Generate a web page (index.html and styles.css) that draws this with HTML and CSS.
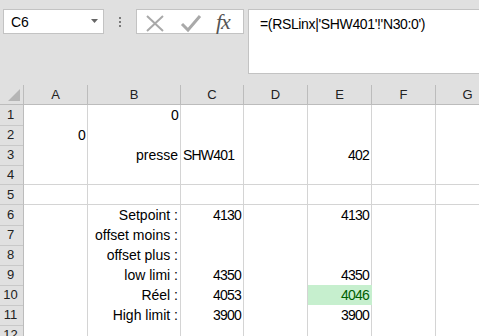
FILE: index.html
```html
<!DOCTYPE html>
<html lang="fr">
<head>
    <meta charset="UTF-8">
    <meta name="viewport" content="width=device-width, initial-scale=1.0">
    <title>Classeur1 - Excel</title>
    <link rel="stylesheet" href="styles.css">
</head>
<body>
    <div class="toolbar">
        <div class="namebox">
            <span>C6</span>
            <svg class="caret" width="7" height="4" viewBox="0 0 7 4"><polygon points="0,0 7,0 3.5,4" fill="#666"/></svg>
        </div>
        <div class="grip"><i></i><i></i><i></i></div>
        <div class="fxbox">
            <svg width="108" height="23" viewBox="0 0 108 23">
                <path d="M10 6 L26 21 M26 6 L10 21" stroke="#a9a9a9" stroke-width="2" fill="none"/>
                <path d="M45 14 L51 20 L63 6" stroke="#a9a9a9" stroke-width="3" fill="none"/>
            </svg>
            <span class="fx">fx</span>
        </div>
        <div class="formula">=(RSLinx|'SHW401'!'N30:0')</div>
    </div>

    <div class="sheet">
        <div class="row head">
            <div class="corner"><svg width="12" height="12" viewBox="0 0 12 12"><polygon points="12,0 12,12 0,12" fill="#b5b5b5"/></svg></div>
            <div class="ch">A</div><div class="ch">B</div><div class="ch">C</div><div class="ch">D</div><div class="ch">E</div><div class="ch">F</div><div class="ch">G</div>
        </div>
        <div class="row">
            <div class="rh">1</div><div class="c"></div><div class="c r num">0</div><div class="c"></div><div class="c"></div><div class="c"></div><div class="c"></div><div class="c"></div>
        </div>
        <div class="row">
            <div class="rh">2</div><div class="c r num">0</div><div class="c"></div><div class="c"></div><div class="c"></div><div class="c"></div><div class="c"></div><div class="c"></div>
        </div>
        <div class="row">
            <div class="rh">3</div><div class="c"></div><div class="c r">presse</div><div class="c num">SHW401</div><div class="c"></div><div class="c r num">402</div><div class="c"></div><div class="c"></div>
        </div>
        <div class="row">
            <div class="rh">4</div><div class="c"></div><div class="c"></div><div class="c"></div><div class="c"></div><div class="c"></div><div class="c"></div><div class="c"></div>
        </div>
        <div class="row">
            <div class="rh">5</div><div class="c"></div><div class="c"></div><div class="c"></div><div class="c"></div><div class="c"></div><div class="c"></div><div class="c"></div>
        </div>
        <div class="row">
            <div class="rh">6</div><div class="c"></div><div class="c r">Setpoint :</div><div class="c r num">4130</div><div class="c"></div><div class="c r num">4130</div><div class="c"></div><div class="c"></div>
        </div>
        <div class="row">
            <div class="rh">7</div><div class="c"></div><div class="c r">offset moins :</div><div class="c"></div><div class="c"></div><div class="c"></div><div class="c"></div><div class="c"></div>
        </div>
        <div class="row">
            <div class="rh">8</div><div class="c"></div><div class="c r">offset plus :</div><div class="c"></div><div class="c"></div><div class="c"></div><div class="c"></div><div class="c"></div>
        </div>
        <div class="row">
            <div class="rh">9</div><div class="c"></div><div class="c r">low limi :</div><div class="c r num">4350</div><div class="c"></div><div class="c r num">4350</div><div class="c"></div><div class="c"></div>
        </div>
        <div class="row">
            <div class="rh">10</div><div class="c"></div><div class="c r">Réel :</div><div class="c r num">4053</div><div class="c"></div><div class="c r num good">4046</div><div class="c"></div><div class="c"></div>
        </div>
        <div class="row">
            <div class="rh">11</div><div class="c"></div><div class="c r">High limit :</div><div class="c r num">3900</div><div class="c"></div><div class="c r num">3900</div><div class="c"></div><div class="c"></div>
        </div>
        <div class="row">
            <div class="rh">12</div><div class="c"></div><div class="c"></div><div class="c"></div><div class="c"></div><div class="c"></div><div class="c"></div><div class="c"></div>
        </div>
    </div>
</body>
</html>
```

FILE: styles.css
```css
* {
    box-sizing: border-box;
    margin: 0;
    padding: 0;
}
body {
    font-family: "Liberation Sans", Arial, sans-serif;
    background-color: #e0e0e0;
    width: 479px;
    height: 336px;
    overflow: hidden;
    color: #000;
}
.toolbar {
    display: flex;
    align-items: flex-start;
    height: 85px;
    padding: 9px 0 0 3px;
}
.namebox {
    width: 101px;
    height: 25px;
    background-color: #fff;
    border: 1px solid #c3c3c3;
    display: flex;
    align-items: center;
    justify-content: space-between;
    padding: 0 5px 0 7px;
    font-size: 14px;
}
.caret {
    margin-top: -2px;
}
.grip {
    width: 32px;
    height: 25px;
    display: flex;
    flex-direction: column;
    align-items: center;
    justify-content: center;
    gap: 2px;
}
.grip i {
    display: block;
    width: 2px;
    height: 2px;
    background-color: #7a7a7a;
}
.fxbox {
    width: 108px;
    height: 25px;
    background-color: #fff;
    border: 1px solid #c3c3c3;
    position: relative;
}
.fxbox svg {
    display: block;
}
.fx {
    position: absolute;
    left: 79px;
    top: -1px;
    font-family: "Liberation Serif", "Times New Roman", serif;
    font-style: italic;
    font-size: 22px;
    color: #555;
    letter-spacing: -1px;
}
.formula {
    flex: 1;
    height: 65px;
    margin-left: 4px;
    margin-right: -2px;
    background-color: #fff;
    border: 1px solid #c3c3c3;
    padding: 6px 0 0 11px;
    font-size: 14px;
    letter-spacing: -0.35px;
}
.sheet {
    width: 500px;
}
.row {
    display: grid;
    grid-template-columns: 24px 64px 93px 63px 64px 64px 64px 64px;
    height: 20px;
}
.corner, .ch, .rh {
    border-right: 1px solid #bcbcbc;
    border-bottom: 1px solid #bcbcbc;
}
.corner {
    display: flex;
    align-items: flex-end;
    justify-content: flex-end;
    padding: 0 3px 3px 0;
}
.ch {
    text-align: center;
    font-size: 13px;
    line-height: 19px;
    color: #222;
}
.rh {
    text-align: center;
    font-size: 13px;
    line-height: 18px;
    padding-top: 1px;
    padding-right: 2px;
    color: #222;
    border-bottom-color: #c8c8c8;
}
.c {
    border-right: 1px solid #d4d4d4;
    border-bottom: 1px solid #d4d4d4;
    background-color: #fff;
    font-size: 14px;
    line-height: 19px;
    padding: 1px 2px 0 2px;
    white-space: nowrap;
}
.r {
    text-align: right;
}
.num {
    letter-spacing: -0.8px;
}
.good {
    background-color: #c6efce;
    color: #006100;
    border-right-color: #c6efce;
}
```
